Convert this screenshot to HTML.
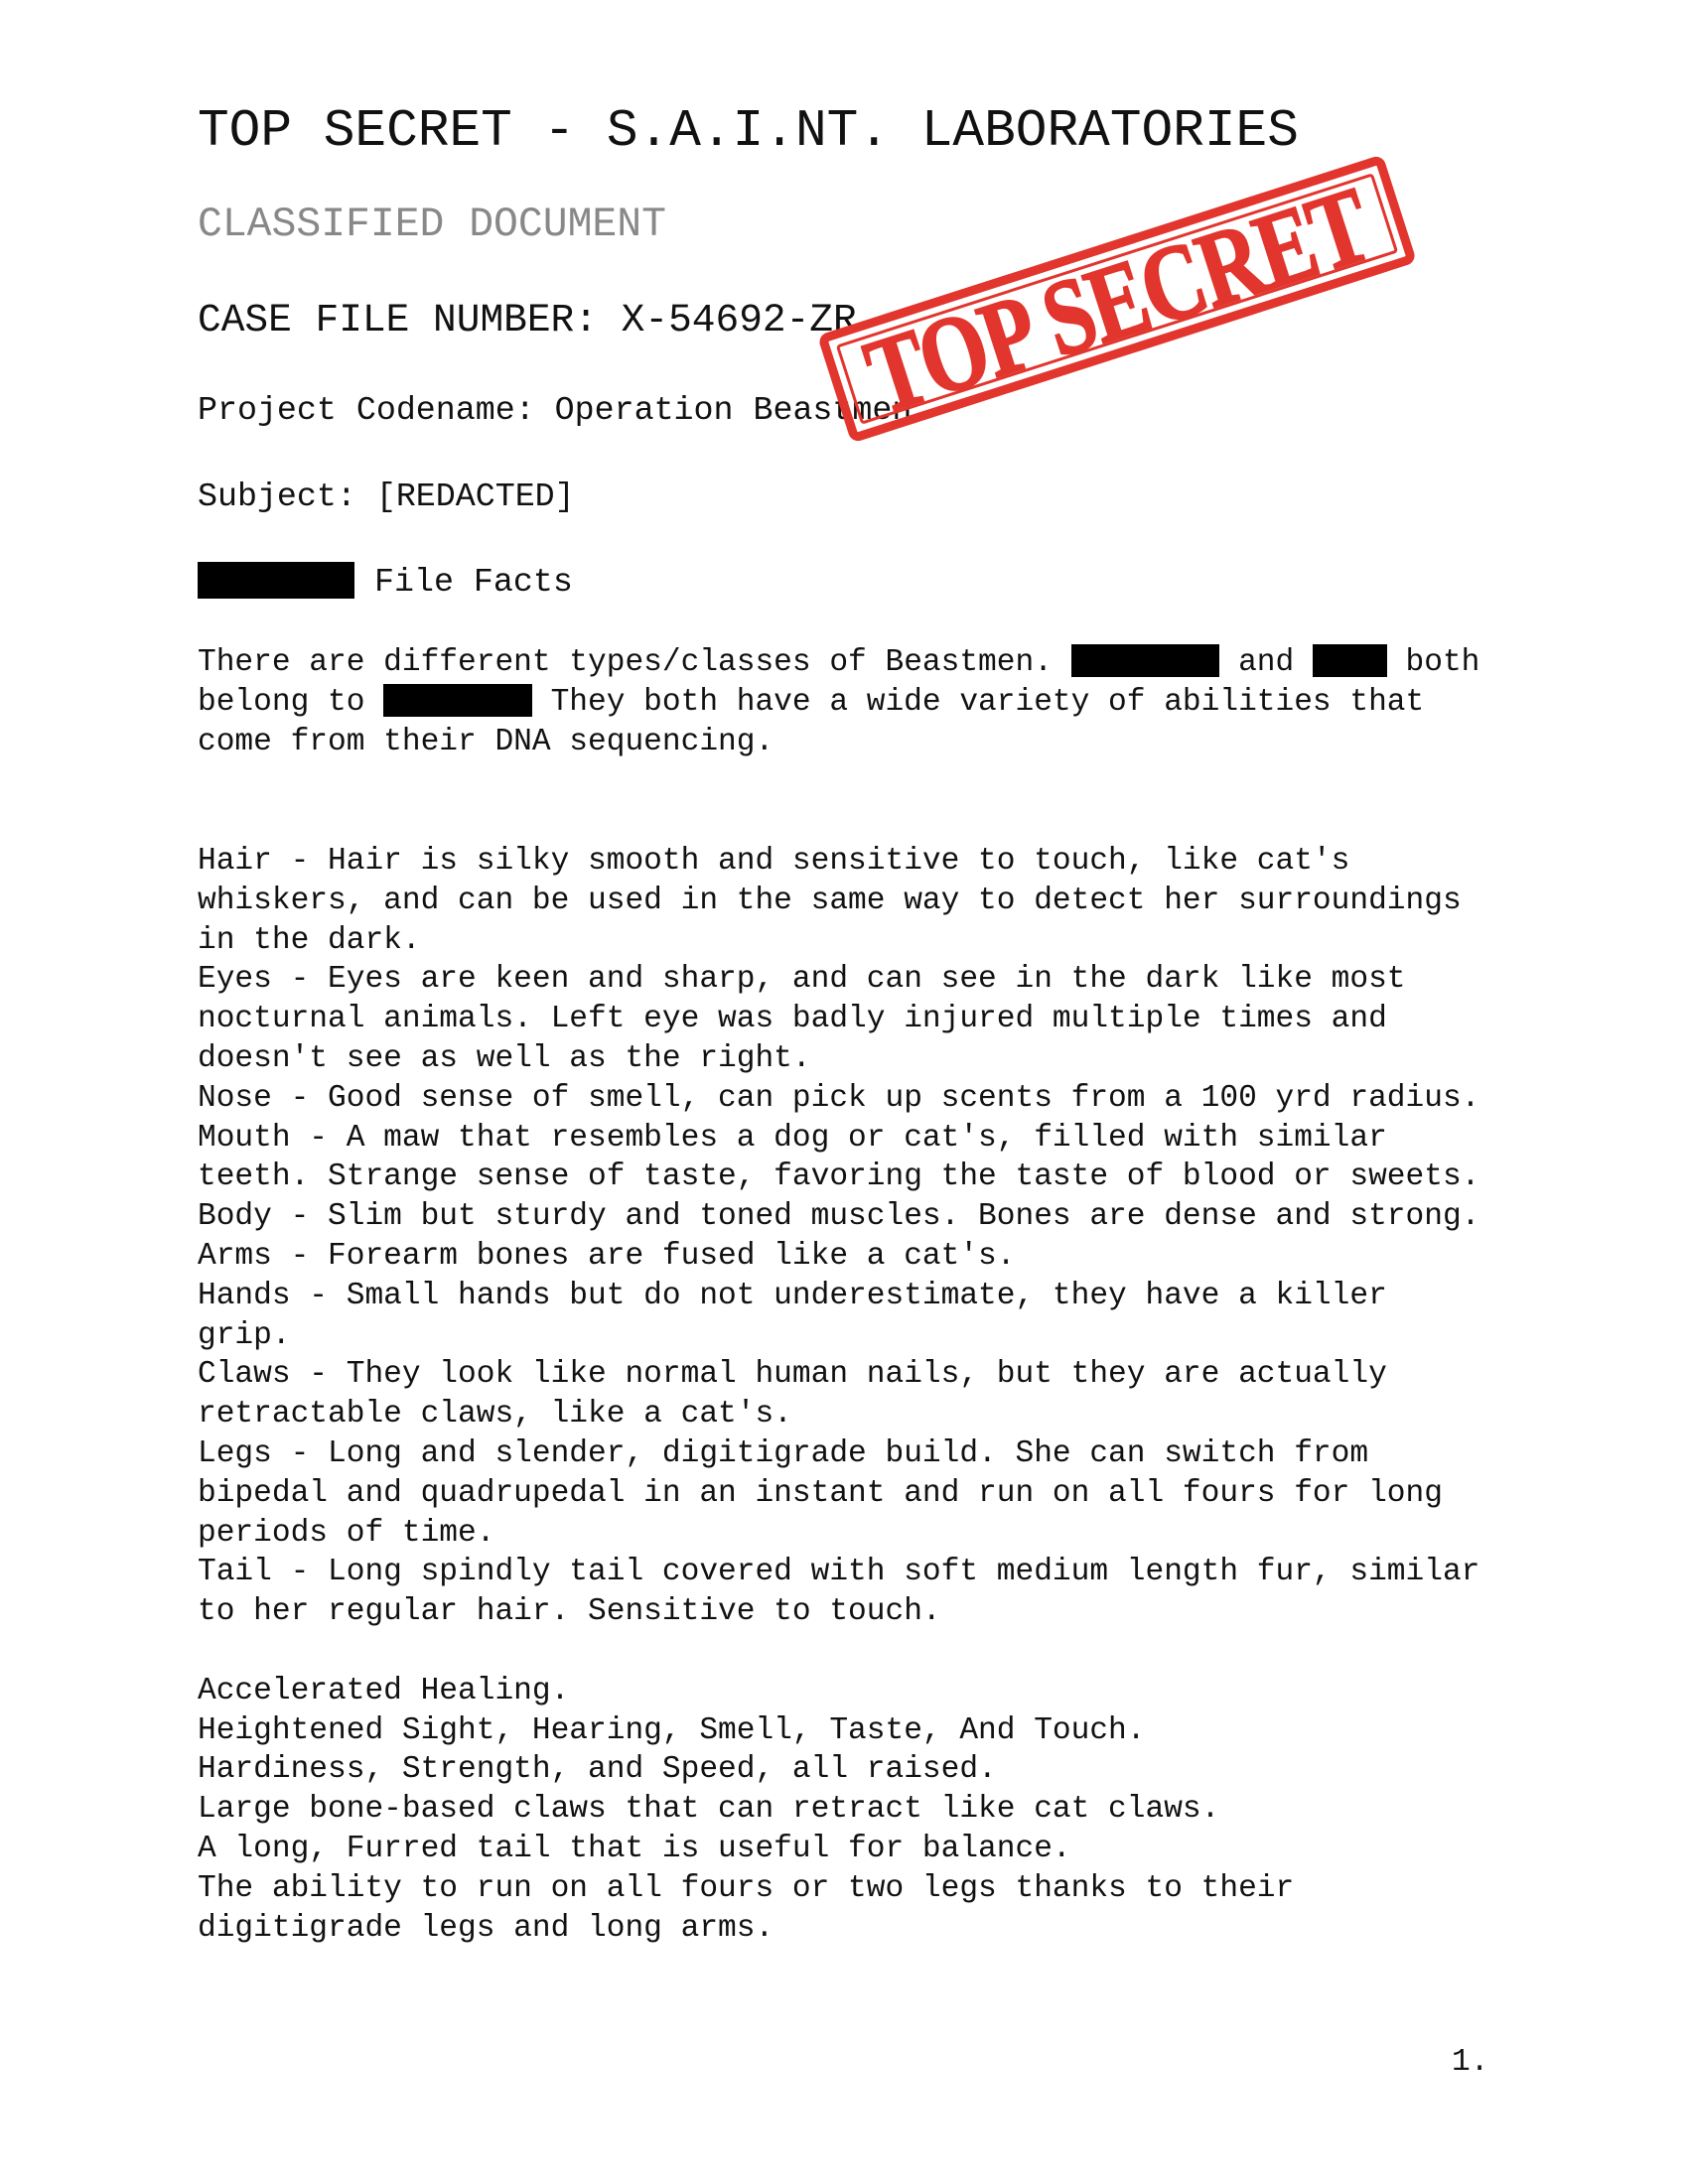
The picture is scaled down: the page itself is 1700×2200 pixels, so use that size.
<!DOCTYPE html>
<html><head><meta charset="utf-8"><style>
html,body{margin:0;padding:0;background:#fff;}
body{width:1700px;height:2200px;position:relative;overflow:hidden;font-family:"Liberation Mono","Courier New",monospace;color:#111;}
.l{position:absolute;left:199px;white-space:pre;}
.b{font-size:31.2px;line-height:39.8px;}
.r{display:inline-block;background:#000;height:33px;vertical-align:-7px;}
</style></head><body>
<div class="l" style="top:102px;font-size:52.8px;line-height:60px;">TOP SECRET - S.A.I.NT. LABORATORIES</div>
<div class="l" style="top:203px;font-size:41.4px;line-height:48px;color:#888;">CLASSIFIED DOCUMENT</div>
<div class="l" style="top:299px;font-size:39.5px;line-height:48px;">CASE FILE NUMBER: X-54692-ZR</div>
<div class="l" style="top:393px;font-size:33.3px;line-height:40px;">Project Codename: Operation Beastmen</div>
<div class="l" style="top:480px;font-size:33.3px;line-height:40px;">Subject: [REDACTED]</div>
<div style="position:absolute;left:199px;top:566px;width:158px;height:37px;background:#000;"></div>
<div class="l" style="top:566px;left:377px;font-size:33.3px;line-height:40px;">File Facts</div>
<div class="l b" style="top:648px;">There are different types/classes of Beastmen. <span class="r" style="width:8ch"></span> and <span class="r" style="width:4ch"></span> both
belong to <span class="r" style="width:8ch"></span> They both have a wide variety of abilities that
come from their DNA sequencing.</div>
<div class="l b" style="top:848px;">Hair - Hair is silky smooth and sensitive to touch, like cat's
whiskers, and can be used in the same way to detect her surroundings
in the dark.
Eyes - Eyes are keen and sharp, and can see in the dark like most
nocturnal animals. Left eye was badly injured multiple times and
doesn't see as well as the right.
Nose - Good sense of smell, can pick up scents from a 100 yrd radius.
Mouth - A maw that resembles a dog or cat's, filled with similar
teeth. Strange sense of taste, favoring the taste of blood or sweets.
Body - Slim but sturdy and toned muscles. Bones are dense and strong.
Arms - Forearm bones are fused like a cat's.
Hands - Small hands but do not underestimate, they have a killer
grip.
Claws - They look like normal human nails, but they are actually
retractable claws, like a cat's.
Legs - Long and slender, digitigrade build. She can switch from
bipedal and quadrupedal in an instant and run on all fours for long
periods of time.
Tail - Long spindly tail covered with soft medium length fur, similar
to her regular hair. Sensitive to touch.

Accelerated Healing.
Heightened Sight, Hearing, Smell, Taste, And Touch.
Hardiness, Strength, and Speed, all raised.
Large bone-based claws that can retract like cat claws.
A long, Furred tail that is useful for balance.
The ability to run on all fours or two legs thanks to their
digitigrade legs and long arms.</div>
<div class="l b" style="top:2058px;left:1462px;">1.</div>
<div style="position:absolute;left:826px;top:244px;width:598px;height:114px;transform:rotate(-17.8deg);transform-origin:center;box-sizing:border-box;border:9px solid #e2352d;border-radius:10px;">
<div style="position:absolute;left:6px;top:6px;right:6px;bottom:6px;border:3px solid #e2352d;border-radius:4px;"></div>
<div style="position:absolute;left:-200px;right:-200px;top:-4px;text-align:center;white-space:nowrap;font-family:'Liberation Serif',serif;font-weight:bold;font-size:108px;line-height:110px;color:#e2352d;letter-spacing:-2px;transform:scaleX(0.8);-webkit-text-stroke:2px #e2352d;">TOP SECRET</div>
</div>
</body></html>
